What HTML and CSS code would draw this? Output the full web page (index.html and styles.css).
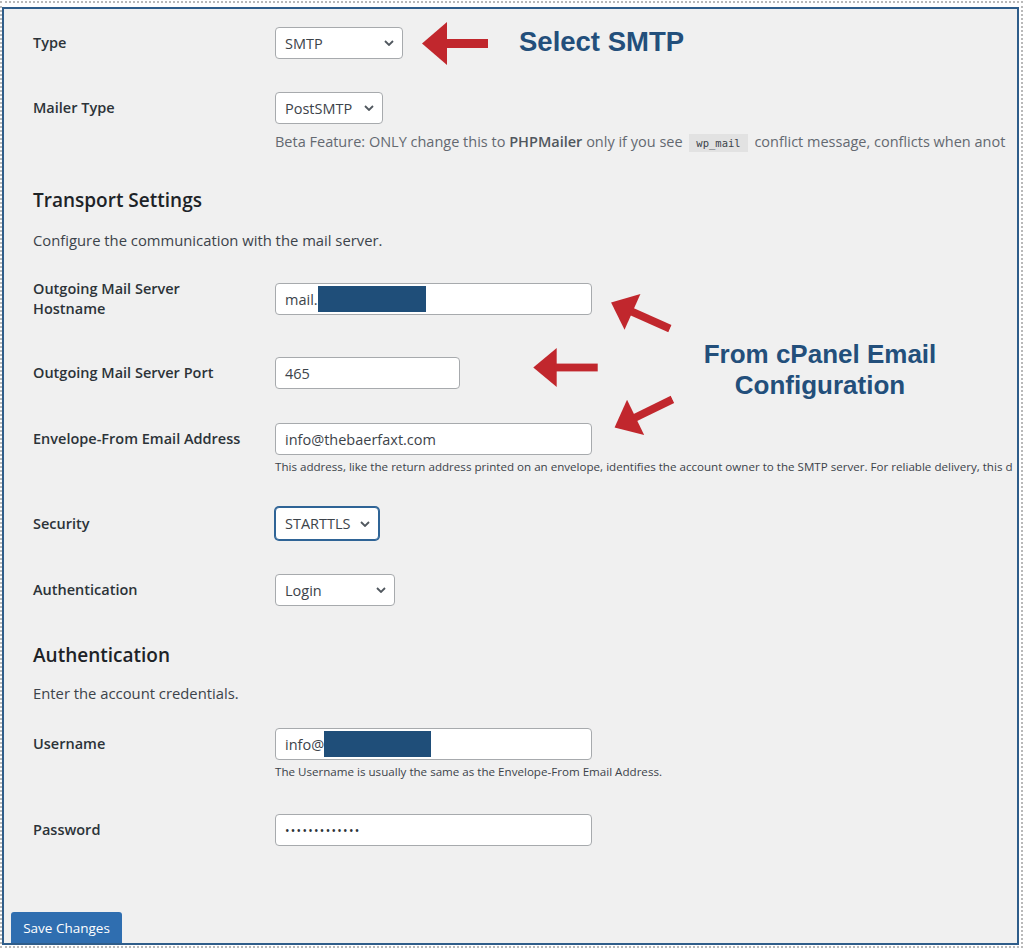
FILE: index.html
```html
<!DOCTYPE html>
<html lang="en">
<head>
  <meta charset="UTF-8" />
  <title>Post SMTP – Account Settings</title>
  <link rel="stylesheet" href="styles.css">
</head>
<body>
  <div class="frame">
    <div class="panel">

      <div class="form">
        <div class="field">
          <label class="lbl">Type</label>
          <div class="select sel-type">SMTP
            <svg class="chev" viewBox="0 0 10 6"><path d="M1 1l4 4 4-4" /></svg>
          </div>
        </div>

        <div class="field field-mailer">
          <label class="lbl">Mailer Type</label>
          <div class="select sel-mailer">PostSMTP
            <svg class="chev" viewBox="0 0 10 6"><path d="M1 1l4 4 4-4" /></svg>
          </div>
        </div>
        <p class="beta">Beta Feature: ONLY change this to <b>PHPMailer</b> only if you see <code>wp_mail</code> conflict message, conflicts when anot</p>

        <h2>Transport Settings</h2>
        <p class="desc">Configure the communication with the mail server.</p>

        <div class="field field-host">
          <label class="lbl">Outgoing Mail Server<br>Hostname</label>
          <div class="input wide">mail.<span class="redact redact-host"></span></div>
        </div>

        <div class="field field-port">
          <label class="lbl">Outgoing Mail Server Port</label>
          <div class="input port">465</div>
        </div>

        <div class="field">
          <label class="lbl">Envelope-From Email Address</label>
          <div class="input wide">info@thebaerfaxt.com</div>
        </div>
        <p class="help">This address, like the return address printed on an envelope, identifies the account owner to the SMTP server. For reliable delivery, this d</p>

        <div class="field field-security">
          <label class="lbl">Security</label>
          <div class="select sel-security focused">STARTTLS
            <svg class="chev" viewBox="0 0 10 6"><path d="M1 1l4 4 4-4" /></svg>
          </div>
        </div>

        <div class="field">
          <label class="lbl">Authentication</label>
          <div class="select sel-auth">Login
            <svg class="chev" viewBox="0 0 10 6"><path d="M1 1l4 4 4-4" /></svg>
          </div>
        </div>

        <h2 class="h-auth">Authentication</h2>
        <p class="desc desc-auth">Enter the account credentials.</p>

        <div class="field field-user">
          <label class="lbl">Username</label>
          <div class="input wide">info@<span class="redact redact-user"></span></div>
        </div>
        <p class="help">The Username is usually the same as the Envelope-From Email Address.</p>

        <div class="field field-pass">
          <label class="lbl">Password</label>
          <div class="input wide dots">&bull;&bull;&bull;&bull;&bull;&bull;&bull;&bull;&bull;&bull;&bull;&bull;&bull;</div>
        </div>
      </div>

      <button class="save">Save Changes</button>

      <!-- annotations drawn over the screenshot -->
      <svg class="arrow arrow-type" viewBox="0 0 66 43"><polygon points="0,21.5 25,0 25,43" /><rect x="23" y="17" width="43" height="9" /></svg>
      <div class="note note-smtp">Select SMTP</div>

      <svg class="arrow arrow-up" viewBox="0 0 66 42"><polygon points="0,21 24,1 24,41" /><rect x="22" y="17" width="44" height="8" /></svg>
      <svg class="arrow arrow-left" viewBox="0 0 66 42"><polygon points="0,21 24,1 24,41" /><rect x="22" y="17" width="44" height="8" /></svg>
      <svg class="arrow arrow-down" viewBox="0 0 66 42"><polygon points="0,21 24,1 24,41" /><rect x="22" y="17" width="44" height="8" /></svg>
      <div class="note note-cpanel">From cPanel Email<br>Configuration</div>
    </div>
  </div>
</body>
</html>
```

FILE: styles.css
```css
body {
  margin: 0;
  background: #fff;
  font-family: 'Open Sans', 'Noto Sans', sans-serif;
  color: #1d2327;
}

.frame {
  margin: 1px 1px 0 0;
  padding: 4px 2px 1px 0;
  border: 2px dotted #b9b9b9;
}

.panel {
  position: relative;
  box-sizing: border-box;
  height: 938px;
  padding: 18px 0 0 7px;
  background: #f0f0f0;
  border: 2px solid #2f5d8a;
  overflow: hidden;
}

.form { padding-left: 22px; }

.field {
  display: grid;
  grid-template-columns: 242px auto;
  align-items: center;
  justify-content: start;
  margin-top: 34px;
}

.field:first-child { margin-top: 0; }
.field-mailer { margin-top: 33px; }
.field-host { margin-top: 29px; }
.field-port { margin-top: 38px; }
.field-security { margin-top: 33px; }
.field-user { margin-top: 25px; }
.field-pass { margin-top: 35px; }

.lbl {
  font-size: 14.5px;
  font-weight: 600;
  line-height: 20px;
  color: #2c3338;
}

.select, .input {
  box-sizing: border-box;
  height: 32px;
  border: 1px solid #a7aaad;
  border-radius: 4px;
  background: #fff;
  font-size: 14.5px;
  color: #3c434a;
  display: flex;
  align-items: center;
  padding: 0 9px;
  white-space: nowrap;
}

.select { justify-content: space-between; padding-right: 8px; }
.chev {
  width: 10px;
  height: 6px;
  fill: none;
  stroke: #50575e;
  stroke-width: 1.8;
}

.sel-type { width: 128px; }
.sel-mailer { width: 108px; }
.sel-security { width: 104px; height: 33px; }
.sel-auth { width: 120px; }

.focused {
  border-color: #2f6496;
  box-shadow: 0 0 0 1px #2f6496;
}

.wide { width: 317px; }
.port { width: 185px; }

.redact {
  display: inline-block;
  height: 26px;
  background: #1f4e79;
}
.redact-host { width: 108px; }
.redact-user { width: 107px; }

.dots { font-size: 12px; letter-spacing: 1.3px; color: #2c3338; }

.beta {
  margin: 9px 0 0 242px;
  font-size: 14.5px;
  line-height: 18px;
  color: #646970;
  white-space: nowrap;
}
.beta b { font-weight: 600; color: #50575e; }
.beta code {
  font-family: 'DejaVu Sans Mono', monospace;
  font-size: 10.5px;
  line-height: 14px;
  background: #e2e2e2;
  padding: 3px 7px;
  margin: 0 3px;
  color: #3c434a;
}

h2 {
  margin: 36px 0 0;
  font-size: 19px;
  font-weight: 600;
  line-height: 26px;
  color: #1d2327;
}
h2.h-auth { margin-top: 36px; }

.desc {
  margin: 17px 0 0;
  font-size: 14.8px;
  line-height: 20px;
  color: #3c434a;
}
.desc-auth { margin-top: 15px; }

.help {
  margin: 5px 0 0 242px;
  font-size: 11.6px;
  line-height: 14px;
  color: #3c434a;
  white-space: nowrap;
}

.save {
  display: block;
  margin-top: 66px;
  height: 31px;
  width: 111px;
  border: none;
  border-radius: 3px 3px 0 0;
  background: #2f6eb0;
  color: #fff;
  font-family: 'Open Sans', 'Noto Sans', sans-serif;
  font-size: 13.5px;
  padding: 0;
}

/* Annotations */
.arrow {
  position: absolute;
  width: 65px;
  height: 41px;
  fill: #c1272d;
}
.arrow-type { left: 418px; top: 13px; width: 66px; height: 43px; }
.arrow-left { left: 529px; top: 338px; }
.arrow-up { left: 604px; top: 286px; transform: rotate(24deg); }
.arrow-down { left: 607px; top: 384px; transform: rotate(-26deg); }

.note {
  position: absolute;
  font-family: 'Liberation Sans', Arial, sans-serif;
  font-weight: bold;
  color: #234f7b;
}
.note-smtp {
  left: 515px;
  top: 18px;
  font-size: 27.5px;
  line-height: 30px;
}
.note-cpanel {
  left: 666px;
  top: 330px;
  width: 300px;
  text-align: center;
  font-size: 26px;
  line-height: 31px;
}
```
